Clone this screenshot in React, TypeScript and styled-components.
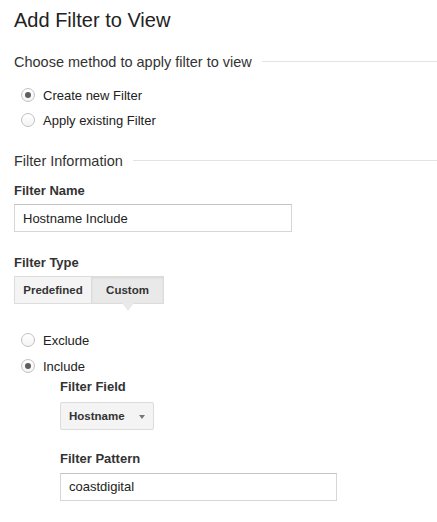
import styled, { createGlobalStyle } from "styled-components";

const GlobalStyle = createGlobalStyle`
  * { box-sizing: border-box; }
  body {
    margin: 0;
    background: #fff;
    font-family: "Liberation Sans", Arial, sans-serif;
    color: #222;
  }
`;

const Page = styled.div`
  width: 437px;
  padding: 8px 0 0 14px;
  display: flex;
  flex-direction: column;
`;

const Title = styled.h1`
  margin: 0;
  font-size: 20px;
  line-height: 24px;
  font-weight: 400;
  color: #222;
`;

const Section = styled.div<{ $top: number }>`
  display: flex;
  align-items: center;
  gap: 10px;
  margin-top: ${(p) => p.$top}px;
  font-size: 14.5px;
  line-height: 18px;
  color: #333;
  &::after {
    content: "";
    flex: 1;
    height: 1px;
    background: #e3e3e3;
    margin-top: -1px;
  }
`;

const RadioList = styled.div<{ $top: number; $row: number }>`
  display: flex;
  flex-direction: column;
  margin-top: ${(p) => p.$top}px;
  padding-left: 7px;
  & > label {
    height: ${(p) => p.$row}px;
  }
`;

const RadioRow = styled.label`
  display: flex;
  align-items: center;
  gap: 8px;
  font-size: 13px;
  color: #222;
`;

const RadioDot = styled.span<{ $on?: boolean }>`
  width: 14px;
  height: 14px;
  border-radius: 50%;
  border: 1px solid #c2c2c2;
  background: linear-gradient(#fff, #f4f4f4);
  display: flex;
  align-items: center;
  justify-content: center;
  &::after {
    content: "";
    width: 6px;
    height: 6px;
    border-radius: 50%;
    background: ${(p) => (p.$on ? "#5e5e5e" : "transparent")};
  }
`;

const Label = styled.div<{ $top: number }>`
  margin-top: ${(p) => p.$top}px;
  font-size: 13px;
  line-height: 16px;
  font-weight: 700;
  color: #333;
`;

const TextInput = styled.div<{ $width: number }>`
  margin-top: 5.5px;
  width: ${(p) => p.$width}px;
  height: 28px;
  border: 1px solid #d6d6d6;
  border-top-color: #c4c4c4;
  padding: 0 8px;
  display: flex;
  align-items: center;
  font-size: 13px;
  color: #222;
`;

const Toggle = styled.div`
  margin-top: 5.5px;
  display: flex;
`;

const ToggleButton = styled.div<{ $width: number; $on?: boolean }>`
  position: relative;
  width: ${(p) => p.$width}px;
  height: 28px;
  display: flex;
  align-items: center;
  justify-content: center;
  font-size: 11.5px;
  font-weight: 700;
  color: #333;
  border: 1px solid #dcdcdc;
  background: ${(p) => (p.$on ? "#e9e9e9" : "#f4f4f4")};
  box-shadow: ${(p) => (p.$on ? "inset 0 1px 2px rgba(0,0,0,0.08)" : "none")};
  & + & {
    border-left: none;
  }
  &::after {
    content: "";
    display: ${(p) => (p.$on ? "block" : "none")};
    position: absolute;
    left: 50%;
    top: 100%;
    margin-left: -6px;
    border-left: 6px solid transparent;
    border-right: 6px solid transparent;
    border-top: 8px solid #e9e9e9;
  }
`;

const Nested = styled.div`
  display: flex;
  flex-direction: column;
  padding-left: 46px;
`;

const Select = styled.div`
  margin-top: 6.5px;
  width: 94px;
  height: 28px;
  border: 1px solid #dcdcdc;
  border-radius: 2px;
  background: #f4f4f4;
  display: flex;
  align-items: center;
  justify-content: space-between;
  padding: 0 8px 0 8px;
  font-size: 11.5px;
  font-weight: 700;
  color: #333;
`;

const Caret = styled.span`
  width: 0;
  height: 0;
  border-left: 3.5px solid transparent;
  border-right: 3.5px solid transparent;
  border-top: 4px solid #777;
  margin-top: 2px;
`;

export default function App() {
  return (
    <>
      <GlobalStyle />
      <Page>
        <Title>Add Filter to View</Title>
        <Section $top={21}>Choose method to apply filter to view</Section>
        <RadioList $top={11.5} $row={25}>
          <RadioRow>
            <RadioDot $on />
            Create new Filter
          </RadioRow>
          <RadioRow>
            <RadioDot />
            Apply existing Filter
          </RadioRow>
        </RadioList>
        <Section $top={19.5}>Filter Information</Section>
        <Label $top={12.5}>Filter Name</Label>
        <TextInput $width={278}>Hostname Include</TextInput>
        <Label $top={22.5}>Filter Type</Label>
        <Toggle>
          <ToggleButton $width={78}>Predefined</ToggleButton>
          <ToggleButton $width={72} $on>
            Custom
          </ToggleButton>
        </Toggle>
        <RadioList $top={23} $row={26}>
          <RadioRow>
            <RadioDot />
            Exclude
          </RadioRow>
          <RadioRow>
            <RadioDot $on />
            Include
          </RadioRow>
        </RadioList>
        <Nested>
          <Label $top={0}>Filter Field</Label>
          <Select>
            Hostname
            <Caret />
          </Select>
          <Label $top={21.5}>Filter Pattern</Label>
          <TextInput $width={277}>coastdigital</TextInput>
        </Nested>
      </Page>
    </>
  );
}
